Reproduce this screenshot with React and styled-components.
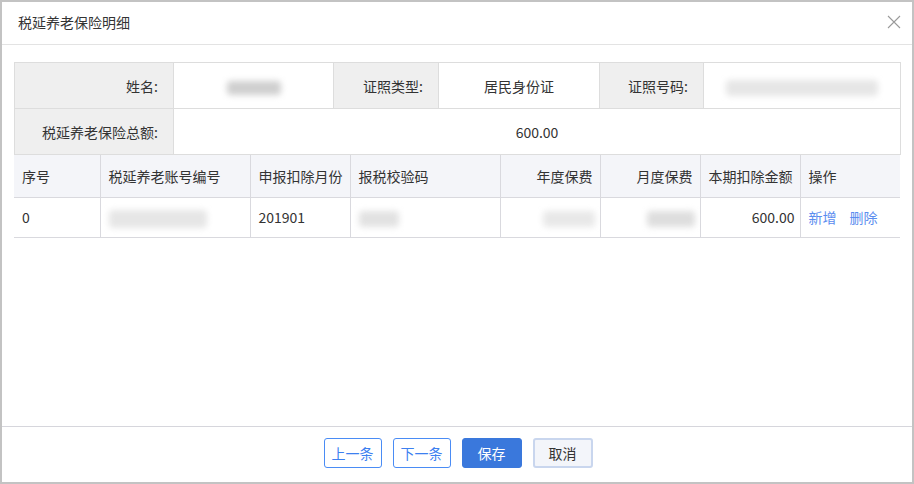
import React from "react";
import styled, { createGlobalStyle } from "styled-components";

const Global = createGlobalStyle`
  html, body { margin: 0; padding: 0; background: #fff; }
  body { font-family: "Noto Sans CJK SC", "Noto Sans", sans-serif; color: #333; }
  * { box-sizing: border-box; }
`;

const Window = styled.div`
  width: 914px;
  height: 484px;
  border: 2px solid #c3c3c3;
  display: flex;
  flex-direction: column;
  background: #fff;
`;

const Header = styled.div`
  height: 43px;
  flex: none;
  border-bottom: 1px solid #e3e3e3;
  display: flex;
  align-items: center;
  justify-content: space-between;
  padding: 0 10px 2px 16px;
`;

const Title = styled.div`
  font-size: 14px;
  color: #333;
`;

const Close = styled.button`
  width: 16px;
  height: 16px;
  border: none;
  background: none;
  padding: 0;
  display: flex;
  align-items: center;
  justify-content: center;
  cursor: pointer;
`;

const Body = styled.div`
  flex: 1;
  padding: 17px 10px 0 12px;
`;

const InfoTable = styled.table`
  width: 886px;
  table-layout: fixed;
  border-collapse: collapse;
  font-size: 14px;
`;

const InfoLabel = styled.td`
  background: #efefef;
  border: 1px solid #dddddd;
  height: 46px;
  text-align: right;
  padding: 0 15px 0 0;
  color: #333;
`;

const InfoValue = styled.td`
  border: 1px solid #dddddd;
  height: 46px;
  text-align: center;
  padding: 0;
  color: #333;
`;

const Blur = styled.span`
  display: inline-block;
  vertical-align: middle;
  width: ${(p) => p.$w}px;
  height: ${(p) => p.$h || 16}px;
  background: ${(p) => p.$c || "#e2e2e2"};
  filter: blur(3px);
  border-radius: 4px;
`;

const Grid = styled.table`
  width: 886px;
  table-layout: fixed;
  border-collapse: collapse;
  font-size: 14px;
`;

const Th = styled.th`
  background: #f4f5f9;
  font-weight: normal;
  height: 42px;
  padding: 0 7px 0 8px;
  text-align: ${(p) => p.$align || "left"};
  border-left: 1px solid #d9d9de;
  border-bottom: 1px solid #d9d9de;
  color: #333;
  white-space: nowrap;
  &:first-child { border-left: none; }
`;

const Td = styled.td`
  height: 40px;
  padding: 0 5px 0 8px;
  text-align: ${(p) => p.$align || "left"};
  border-left: 1px solid #d9d9de;
  border-bottom: 1px solid #d9d9de;
  color: #333;
  white-space: nowrap;
  &:first-child { border-left: none; }
`;

const Link = styled.a`
  color: #5b8def;
  text-decoration: none;
  margin-right: 13px;
  cursor: pointer;
`;

const Footer = styled.div`
  height: 56px;
  flex: none;
  border-top: 1px solid #d6d6dc;
  display: flex;
  justify-content: center;
  align-items: flex-start;
  padding: 11px 0 0 2px;
  gap: 11px;
`;

const Button = styled.button`
  height: 30px;
  width: ${(p) => p.$w || 58}px;
  font-family: inherit;
  font-size: 14px;
  border-radius: 3px;
  padding: 0;
  cursor: pointer;
  ${(p) =>
    p.$variant === "primary"
      ? `background:#3a78dc;border:1px solid #3a78dc;color:#fff;`
      : p.$variant === "cancel"
      ? `background:#f3f5fa;border:2px solid #c9d6ee;color:#333;`
      : `background:#fff;border:1px solid #4a8cf5;color:#3d80f0;`}
`;

export default function App() {
  return (
    <>
      <Global />
      <Window>
        <Header>
          <Title>税延养老保险明细</Title>
          <Close aria-label="close">
            <svg width="14" height="14" viewBox="0 0 14 14">
              <path d="M1 1 L13 13 M13 1 L1 13" stroke="#9a9a9a" strokeWidth="1.1" fill="none" />
            </svg>
          </Close>
        </Header>
        <Body>
          <InfoTable>
            <colgroup>
              <col style={{ width: 159 }} />
              <col style={{ width: 160 }} />
              <col style={{ width: 105 }} />
              <col style={{ width: 161 }} />
              <col style={{ width: 104 }} />
              <col style={{ width: 197 }} />
            </colgroup>
            <tbody>
              <tr>
                <InfoLabel>姓名:</InfoLabel>
                <InfoValue>
                  <Blur $w={54} $h={14} $c="#cfcfcf" />
                </InfoValue>
                <InfoLabel>证照类型:</InfoLabel>
                <InfoValue>居民身份证</InfoValue>
                <InfoLabel>证照号码:</InfoLabel>
                <InfoValue>
                  <Blur $w={152} $h={16} $c="#e6e6e6" />
                </InfoValue>
              </tr>
              <tr>
                <InfoLabel>税延养老保险总额:</InfoLabel>
                <InfoValue colSpan={5}>600.00</InfoValue>
              </tr>
            </tbody>
          </InfoTable>
          <Grid>
            <colgroup>
              <col style={{ width: 86 }} />
              <col style={{ width: 150 }} />
              <col style={{ width: 100 }} />
              <col style={{ width: 150 }} />
              <col style={{ width: 100 }} />
              <col style={{ width: 100 }} />
              <col style={{ width: 100 }} />
              <col style={{ width: 100 }} />
            </colgroup>
            <thead>
              <tr>
                <Th>序号</Th>
                <Th>税延养老账号编号</Th>
                <Th>申报扣除月份</Th>
                <Th>报税校验码</Th>
                <Th $align="right">年度保费</Th>
                <Th $align="right">月度保费</Th>
                <Th $align="right">本期扣除金额</Th>
                <Th>操作</Th>
              </tr>
            </thead>
            <tbody>
              <tr>
                <Td>0</Td>
                <Td>
                  <Blur $w={98} $h={18} $c="#e6e6e6" />
                </Td>
                <Td>201901</Td>
                <Td>
                  <Blur $w={40} $h={16} $c="#e2e2e2" />
                </Td>
                <Td $align="right">
                  <Blur $w={52} $h={16} $c="#e8e8e8" />
                </Td>
                <Td $align="right">
                  <Blur $w={48} $h={16} $c="#dedede" />
                </Td>
                <Td $align="right">600.00</Td>
                <Td>
                  <Link>新增</Link>
                  <Link>删除</Link>
                </Td>
              </tr>
            </tbody>
          </Grid>
        </Body>
        <Footer>
          <Button>上一条</Button>
          <Button>下一条</Button>
          <Button $variant="primary" $w={60}>保存</Button>
          <Button $variant="cancel" $w={60}>取消</Button>
        </Footer>
      </Window>
    </>
  );
}
